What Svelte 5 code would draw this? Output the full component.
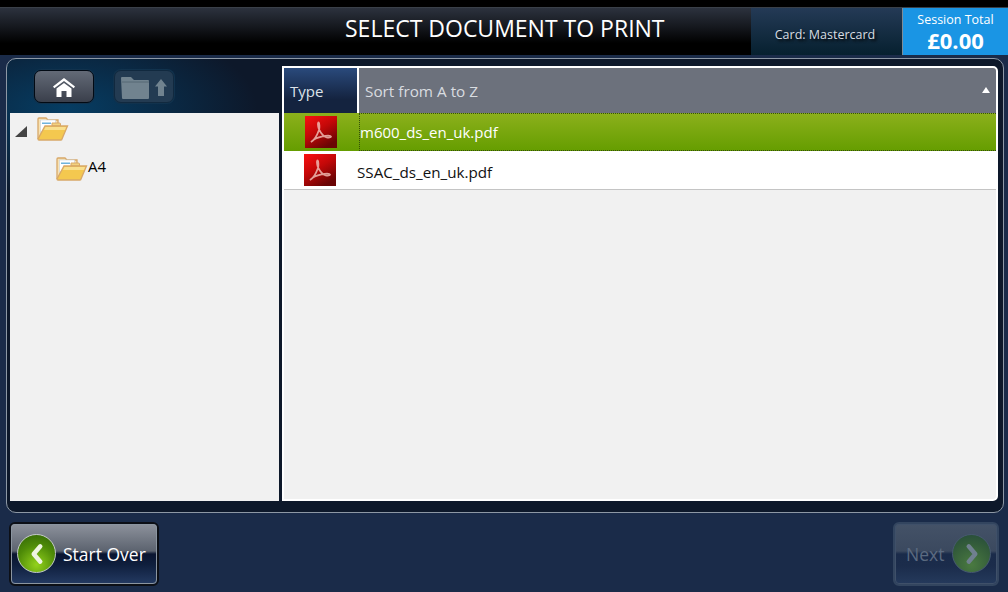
<script>
  const files = [
    { name: "m600_ds_en_uk.pdf", selected: true },
    { name: "SSAC_ds_en_uk.pdf", selected: false }
  ];
</script>

{#snippet folderOpen()}
  <svg class="folder" width="32" height="24" viewBox="0 0 32 24">
    <path d="M1 22V2a1 1 0 0 1 1-1h7l2 2h10v4" fill="#f7e2b4" stroke="#d8a868" stroke-width="1.300"/>
    <rect x="3.500" y="3" width="15" height="12" fill="#fff" stroke="#c9d3dc" stroke-width=".6"/>
    <rect x="5" y="5.500" width="9" height="1.500" fill="#6fb3dc"/>
    <path d="M15 6h7.500a1 1 0 0 1 1 1v2H15z" fill="#f3d27e" stroke="#d8a868"/>
    <path d="M8 9H30.500L25 22a1 1 0 0 1-1 1H2a1 1 0 0 1-1-1z" fill="#f4c84f" stroke="#d8a868" stroke-width="1.300"/>
    <path d="M8.500 10H29l-1 3H7z" fill="#f9e08e"/>
  </svg>
{/snippet}

{#snippet pdfIcon()}
  <svg width="32" height="32" viewBox="0 0 32 32" class="pdf">
    <defs>
      <linearGradient id="pdfbg" x1="0" y1="0" x2="0.6" y2="1">
        <stop offset="0" stop-color="#fa1010"/>
        <stop offset="0.5" stop-color="#c40808"/>
        <stop offset="1" stop-color="#6a0404"/>
      </linearGradient>
    </defs>
    <rect width="32" height="32" fill="url(#pdfbg)"/>
    <path d="M6 26c3-1.500 6-6.500 8-12 .6-2 .5-7-.3-7.500-1-.3-1 3.500.3 6.800 2 4 5 7.300 7.700 8 2 .5 4.500.2 4.300-.8-.3-1-4.500-1-8.500-.2-4 .8-9 3-11.500 5.700z" fill="none" stroke="#efb8b0" stroke-width="1.800" opacity=".85"/>
  </svg>
{/snippet}

<div class="screen">
  <header class="topbar">
    <div class="title">SELECT DOCUMENT TO PRINT</div>
    <div class="card">Card: Mastercard</div>
    <div class="session">
      <div class="session-label">Session Total</div>
      <div class="session-value">£0.00</div>
    </div>
  </header>

  <main class="panel">
    <section class="left">
      <div class="toolbar">
        <button class="tool home" aria-label="Home">
          <svg width="24" height="20" viewBox="0 0 24 20">
            <path d="M12 1L1 9.500l1.300 1.700L12 4l9.700 7.200L23 9.500z" fill="#fff"/>
            <path d="M4.500 11.500L12 6l7.500 5.500V20h-5v-6h-5v6h-5z" fill="#fff"/>
          </svg>
        </button>
        <button class="tool up" aria-label="Up one folder">
          <svg width="48" height="26" viewBox="0 0 48 26">
            <path d="M1 4a1 1 0 0 1 1-1h9l3 3h14a1 1 0 0 1 1 1v17a1 1 0 0 1-1 1H3a1 1 0 0 1-1-1z" fill="#71838f"/>
            <path d="M2 8h27" stroke="#566874" stroke-width="1"/>
            <path d="M41 5l6 7.500h-3V22h-6v-9.500h-3z" fill="#71838f"/>
          </svg>
        </button>
      </div>
      <div class="tree">
        <div class="node root">
          <span class="expander"></span>
          {@render folderOpen()}
        </div>
        <div class="node child">
          {@render folderOpen()}
          <span class="node-label">A4</span>
        </div>
      </div>
    </section>

    <section class="right">
      <div class="thead">
        <div class="th-type">Type</div>
        <div class="th-name">
          <span>Sort from A to Z</span>
          <span class="sort-arrow"></span>
        </div>
      </div>
      {#each files as file}
        <div class="row" class:selected={file.selected}>
          <div class="cell-icon">{@render pdfIcon()}</div>
          <div class="cell-name">{file.name}</div>
        </div>
      {/each}
    </section>
  </main>

  <footer class="footer">
    <button class="nav">
      <span class="orb">
        <svg width="18" height="22" viewBox="0 0 16 20"><path d="M11 3L5 10l6 7" fill="none" stroke="#eef4e2" stroke-width="4" stroke-linecap="round" stroke-linejoin="round"/></svg>
      </span>
      <span>Start Over</span>
    </button>
    <button class="nav next" disabled>
      <span>Next</span>
      <span class="orb">
        <svg width="18" height="22" viewBox="0 0 16 20"><path d="M5 3l6 7-6 7" fill="none" stroke="#70808f" stroke-width="4" stroke-linecap="round" stroke-linejoin="round"/></svg>
      </span>
    </button>
  </footer>
</div>

<style>
  :global(body) {
    margin: 0;
    background: #1a2b49;
  }

  .screen {
    width: 1008px;
    height: 592px;
    overflow: hidden;
    display: flex;
    flex-direction: column;
    font-family: "Open Sans", "Noto Sans", sans-serif;
    background: #1a2b49;
  }

  .topbar {
    height: 47px;
    margin-top: 7px;
    flex: none;
    display: flex;
    background: linear-gradient(#2c323e 0, #15181e 40%, #000 75%);
    border-top: 1px solid #3a4049;
    box-shadow: 0 -7px 0 #000;
  }

  .title {
    width: 751px;
    padding-left: 345px;
    box-sizing: border-box;
    color: #fff;
    font-size: 23px;
    line-height: 40px;
  }

  .card {
    width: 151px;
    box-sizing: border-box;
    background: linear-gradient(#243a56, #06202f);
    color: #d6dde2;
    font-size: 12.500px;
    text-align: center;
    padding: 18px 3px 0 0;
    text-shadow: 2px 2px 3px #000;
  }

  .session {
    width: 106px;
    background: #1a95e4;
    border-left: 1px solid #7f8c96;
    box-sizing: border-box;
    color: #fff;
    text-align: center;
  }

  .session-label {
    font-size: 12.500px;
    line-height: 14px;
    margin-top: 5px;
  }

  .session-value {
    font-size: 22px;
    font-weight: 700;
    line-height: 27px;
  }

  .panel {
    height: 455px;
    margin: 3px 4px 0 6px;
    flex: none;
    box-sizing: border-box;
    border: 1px solid #8d98a5;
    border-radius: 10px;
    background: radial-gradient(ellipse 190px 90px at 60px 50px, #063d63, transparent), #0d182a;
    padding: 7px 5px 11px 3px;
    display: flex;
    gap: 3px;
  }

  .left {
    width: 269px;
    display: flex;
    flex-direction: column;
  }

  .toolbar {
    height: 47px;
    flex: none;
    display: flex;
    gap: 20px;
    padding: 4px 0 0 24px;
    box-sizing: border-box;
  }

  .tool {
    width: 60px;
    height: 33px;
    padding: 0;
    box-sizing: border-box;
    border-radius: 7px;
    display: flex;
    align-items: center;
    justify-content: center;
    background: linear-gradient(#636a77, #3a3f4b);
    border: 1px solid #020a14;
    box-shadow: 0 0 0 1px #11324d;
  }

  .tool.up {
    background: #233b52;
    border-color: #11293f;
  }

  .tree {
    flex: 1;
    background: #f1f1f1;
    color: #000;
    font-size: 15px;
  }

  .node {
    display: flex;
    align-items: center;
    height: 24px;
  }

  .root {
    margin-top: 4px;
    padding-left: 5px;
  }

  .child {
    margin-top: 16px;
    padding-left: 46px;
  }

  .node-label {
    margin-top: -7px;
  }

  .expander {
    width: 0;
    height: 0;
    margin: 4px 10px 0 0;
    border-left: 12px solid transparent;
    border-bottom: 11px solid #444;
  }

  .right {
    flex: 1;
    display: flex;
    flex-direction: column;
    background: #f1f1f1;
    border: 2px solid #fff;
    border-radius: 0 5px 5px 0;
    overflow: hidden;
  }

  .thead {
    height: 45px;
    flex: none;
    display: flex;
    background: #fff;
  }

  .th-type {
    width: 73px;
    box-sizing: border-box;
    display: flex;
    align-items: center;
    padding-left: 6px;
    margin-right: 2px;
    color: #dde2e8;
    font-size: 15px;
    background: linear-gradient(#2a4a7c, #14233f 70%);
  }

  .th-name {
    flex: 1;
    display: flex;
    align-items: center;
    background: #6c717c;
    color: #d9dce0;
    font-size: 15.300px;
    padding-left: 6px;
    position: relative;
  }

  .sort-arrow {
    position: absolute;
    right: 6px;
    top: 19px;
    width: 0;
    height: 0;
    border-left: 4px solid transparent;
    border-right: 4px solid transparent;
    border-bottom: 6px solid #fff;
  }

  .row {
    height: 39px;
    flex: none;
    display: flex;
    align-items: center;
    box-sizing: border-box;
    background: #fff;
    border-bottom: 1px solid #c4c4c4;
    margin-left: -1px;
    color: #111;
    font-size: 15.200px;
  }

  .row .cell-name {
    margin-top: 3px;
  }

  .row.selected {
    background: linear-gradient(#8cb01c, #659d00);
    color: #fff;
    border-bottom: none;
    margin-left: 0;
    height: 38px;
    font-size: 15px;
  }

  .cell-icon {
    width: 74px;
    display: flex;
    justify-content: center;
  }

  .cell-name {
    flex: 1;
  }

  .row.selected .cell-name {
    margin: 0 0 0 1px;
    align-self: stretch;
    display: flex;
    align-items: center;
    border: dotted #35500a;
    border-width: 1px 0 1px 1px;
  }

  .pdf {
    display: block;
  }

  .footer {
    flex: 1;
    display: flex;
    justify-content: space-between;
    padding: 9px 9px 0;
  }

  .nav {
    width: 150px;
    height: 64px;
    padding: 0 0 0 6px;
    display: flex;
    align-items: center;
    gap: 7px;
    font-family: inherit;
    font-size: 17.500px;
    color: #fff;
    border: 2px solid #0c0f16;
    outline: 1px solid #8b95a0;
    outline-offset: -3px;
    border-radius: 6px;
    background: linear-gradient(#8d929c 0, #5c636f 45%, #0a1530 50%, #0f1f3d 68%, #243a62 100%);
  }

  .nav.next {
    width: 106px;
    padding: 0 0 0 11px;
    gap: 8px;
    color: #5b6a80;
    border-color: #33455f;
    outline-color: #3f5069;
    background: linear-gradient(#445267 0, #3b495f 45%, #1a2b4a 50%, #1b2c4b 70%, #253a5c 100%);
  }

  .orb {
    width: 39px;
    height: 39px;
    margin-top: -1px;
    border-radius: 50%;
    flex: none;
    display: flex;
    align-items: center;
    justify-content: center;
    background: radial-gradient(circle at 50% 80%, #93d21c, #4f8c08 55%, #2f6206);
    border: 1px solid #c4ccc6;
    box-sizing: border-box;
  }

  .next .orb {
    background: radial-gradient(circle at 50% 80%, #4a7a40, #335c3a 60%, #24483a);
    border-color: #46596f;
  }
</style>
